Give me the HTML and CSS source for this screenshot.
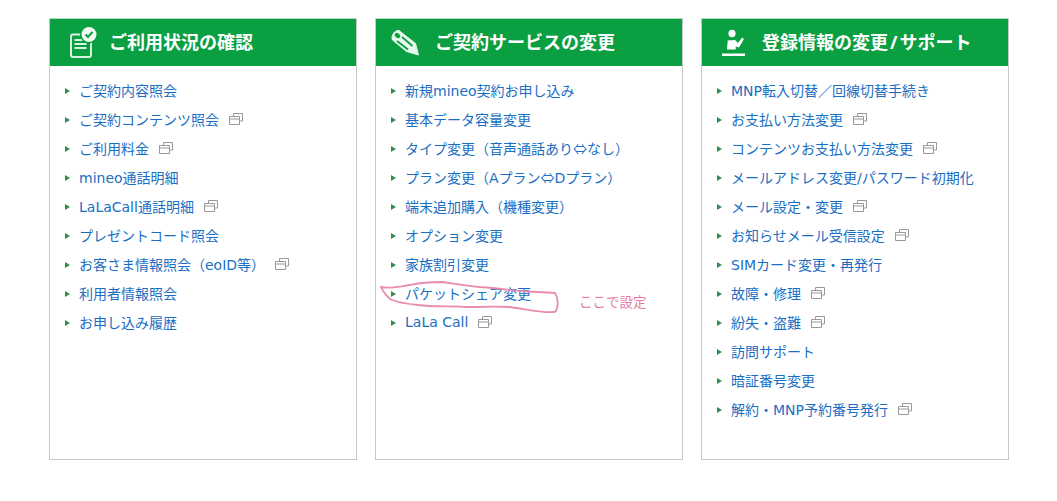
FILE: index.html
```html
<!DOCTYPE html>
<html lang="ja">
<head>
    <meta charset="UTF-8">
    <title>マイページ</title>
    <link rel="stylesheet" href="styles.css">
</head>
<body>
    <svg class="defs" width="0" height="0">
        <symbol id="win" viewBox="0 0 14 12">
            <path d="M4.500 3.500V.5h9v7.500h-3M.5 3.500h10v8H.5zM.5 6h10" fill="none" stroke="#999" stroke-width="1"/>
        </symbol>
    </svg>
    <div class="panels">
        <section class="panel">
            <h2 class="panel-head">
                <svg class="head-icon icon-a" width="30" height="32" viewBox="0 0 30 32">
                    <path d="M13 7.500H3a2 2 0 0 0-2 2V28a2 2 0 0 0 2 2h16a2 2 0 0 0 2-2V15" fill="none" stroke="#d8f3e2" stroke-width="2"/>
                    <path d="M4.500 13h12M4.500 17h12M4.500 21h12" stroke="#d8f3e2" stroke-width="1.800"/>
                    <circle cx="19" cy="7.500" r="9" fill="#0a9f41"/>
                    <circle cx="19" cy="7.500" r="7.500" fill="#f2fbf5"/>
                    <path d="M15.500 7.500l2.500 2.500 4.500-5" fill="none" stroke="#0a9f41" stroke-width="2"/>
                </svg>
                <span>ご利用状況の確認</span>
            </h2>
            <ul class="links">
                <li><a>ご契約内容照会</a></li>
                <li><a>ご契約コンテンツ照会</a><svg class="win"><use href="#win"/></svg></li>
                <li><a>ご利用料金</a><svg class="win"><use href="#win"/></svg></li>
                <li><a>mineo通話明細</a></li>
                <li><a>LaLaCall通話明細</a><svg class="win"><use href="#win"/></svg></li>
                <li><a>プレゼントコード照会</a></li>
                <li><a>お客さま情報照会（eoID等）</a><svg class="win"><use href="#win"/></svg></li>
                <li><a>利用者情報照会</a></li>
                <li><a>お申し込み履歴</a></li>
            </ul>
        </section>
        <section class="panel">
            <h2 class="panel-head">
                <svg class="head-icon icon-b" width="30" height="30" viewBox="0 0 30 30">
                    <path d="M9 2.500L25.500 15.500 28.500 27 16.500 23.500 2.500 12C.5 8 5 1.500 9 2.500z" fill="#e8f8ee" stroke="#e8f8ee" stroke-width="1" stroke-linejoin="round"/>
                    <ellipse cx="7.500" cy="7.500" rx="3" ry="2.200" transform="rotate(38 7.500 7.500)" fill="#0a9f41"/>
                    <path d="M7 13l11 8.500M12 9l10.500 9" stroke="#0a9f41" stroke-width="1.800"/>
                </svg>
                <span>ご契約サービスの変更</span>
            </h2>
            <ul class="links">
                <li><a>新規mineo契約お申し込み</a></li>
                <li><a>基本データ容量変更</a></li>
                <li><a>タイプ変更（音声通話あり<span class="arrow">⇔</span>なし）</a></li>
                <li><a>プラン変更（Aプラン<span class="arrow">⇔</span>Dプラン）</a></li>
                <li><a>端末追加購入（機種変更）</a></li>
                <li><a>オプション変更</a></li>
                <li><a>家族割引変更</a></li>
                <li><a>パケットシェア変更</a></li>
                <li><a>LaLa Call</a><svg class="win"><use href="#win"/></svg></li>
            </ul>
            <svg class="scribble" width="182" height="34" viewBox="0 0 182 34">
                <path d="M1 6C10 8 18 6 30 4 42 1 54 1 63 1c14 2 26 4 37 5 16 1 30 3 40 4 12 1 24 1 35 2 3 5 3 11 2 15-1 3-1 4-3 4-14 1-28-3-44-5-14-1-28 0-42 0-18-1-36 0-50-2-10-1-18-2-26-5C8 17 3 11 1 6z" fill="none" stroke="#e98cb0" stroke-width="1.800"/>
            </svg>
            <span class="note">ここで設定</span>
        </section>
        <section class="panel">
            <h2 class="panel-head">
                <svg class="head-icon icon-c" width="26" height="28" viewBox="0 0 26 28">
                    <ellipse cx="12" cy="4.500" rx="3.600" ry="3.800" fill="#fff"/>
                    <path d="M7 20.500L7.700 11.500 15 11 18 14 22 8.500 24 10 19 18.500 15.700 17.500V20.500z" fill="#fff"/>
                    <path d="M2 24.500h23V27H2z" fill="#fff"/>
                </svg>
                <span>登録情報の変更<span class="slash">/</span>サポート</span>
            </h2>
            <ul class="links">
                <li><a>MNP転入切替／回線切替手続き</a></li>
                <li><a>お支払い方法変更</a><svg class="win"><use href="#win"/></svg></li>
                <li><a>コンテンツお支払い方法変更</a><svg class="win"><use href="#win"/></svg></li>
                <li><a>メールアドレス変更/パスワード初期化</a></li>
                <li><a>メール設定・変更</a><svg class="win"><use href="#win"/></svg></li>
                <li><a>お知らせメール受信設定</a><svg class="win"><use href="#win"/></svg></li>
                <li><a>SIMカード変更・再発行</a></li>
                <li><a>故障・修理</a><svg class="win"><use href="#win"/></svg></li>
                <li><a>紛失・盗難</a><svg class="win"><use href="#win"/></svg></li>
                <li><a>訪問サポート</a></li>
                <li><a>暗証番号変更</a></li>
                <li><a>解約・MNP予約番号発行</a><svg class="win"><use href="#win"/></svg></li>
            </ul>
        </section>
    </div>
</body>
</html>
```

FILE: styles.css
```css
body {
    margin: 0;
    background: #fff;
    font-family: "DejaVu Sans", "Noto Sans CJK JP", sans-serif;
}
.defs {
    position: absolute;
}
.panels {
    display: flex;
    gap: 18px;
    padding: 18px 0 0 49px;
}
.panel {
    position: relative;
    box-sizing: border-box;
    width: 308px;
    height: 442px;
    border: 1px solid #c4c8c6;
    border-top-color: #b5dcc3;
}
.panel-head {
    display: flex;
    align-items: center;
    height: 47px;
    margin: 0;
    background: #0a9f41;
    color: #fff;
    font-family: "Noto Sans", "Noto Sans CJK JP", sans-serif;
    font-size: 18px;
    font-weight: 700;
}
.panel-head span {
    margin-bottom: 4px;
    white-space: nowrap;
}
.panel-head .slash {
    margin: 0 2px;
}
.head-icon {
    flex: none;
}
.icon-a {
    margin: 0 9px 0 20px;
}
.icon-b {
    margin: 0 15px 0 14px;
}
.icon-c {
    margin: 0 16px 0 18px;
}
.links {
    list-style: none;
    margin: 0;
    padding: 9px 0 0 29px;
}
.links li {
    position: relative;
    display: flex;
    align-items: center;
    height: 29px;
    font-size: 14px;
    white-space: nowrap;
}
.links li::before {
    content: "";
    position: absolute;
    left: -14px;
    top: 13px;
    border-left: 5px solid #2f8f4e;
    border-top: 3.5px solid transparent;
    border-bottom: 3.5px solid transparent;
}
.links a {
    color: #1a6fc4;
}
.arrow {
    font-family: "Noto Sans CJK JP", sans-serif;
}
.win {
    width: 14px;
    height: 12px;
    margin-left: 10px;
}
.scribble {
    position: absolute;
    left: 4px;
    top: 262px;
}
.note {
    position: absolute;
    left: 203px;
    top: 273px;
    color: #e67ca4;
    font-size: 13.5px;
    line-height: 20px;
}
```
